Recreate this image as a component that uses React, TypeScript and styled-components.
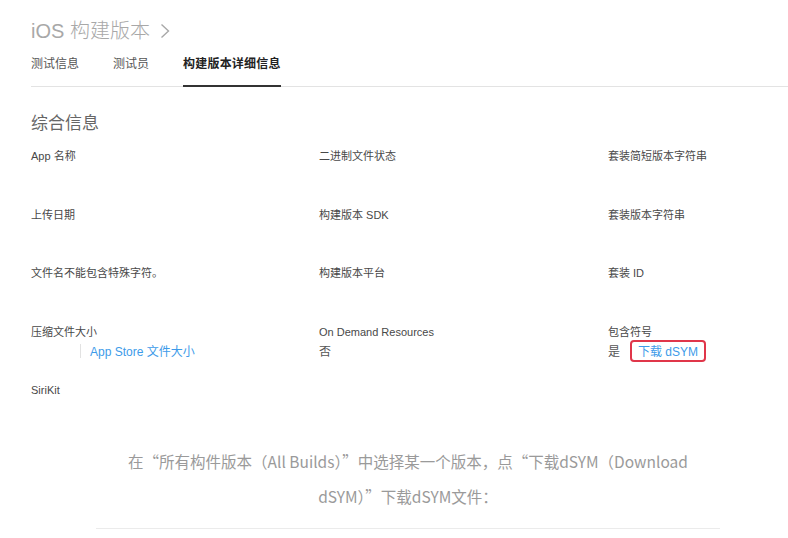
import styled, { createGlobalStyle } from "styled-components";

const GlobalStyle = createGlobalStyle`
  body {
    margin: 0;
    background: #fff;
    font-family: "Liberation Sans", "Noto Sans CJK SC", sans-serif;
  }
`;

const Page = styled.div`
  width: 788px;
  height: 538px;
  overflow: hidden;
  background: #fff;
`;

const Header = styled.header`
  padding-left: 31px;
`;

const Title = styled.h1`
  margin: 0;
  padding-top: 19px;
  display: flex;
  align-items: center;
  gap: 10px;
  font-size: 20px;
  line-height: 24px;
  font-weight: 300;
  color: #a8a8a8;
`;

const Tabs = styled.nav`
  margin-top: 12px;
  display: flex;
  gap: 34px;
  border-bottom: 1px solid #e3e3e3;
`;

const Tab = styled.div<{ $active?: boolean }>`
  font-size: 12px;
  line-height: 18px;
  padding-bottom: 12px;
  letter-spacing: ${({ $active }) => ($active ? "0.2px" : "0")};
  font-weight: ${({ $active }) => ($active ? 700 : 400)};
  color: ${({ $active }) => ($active ? "#222" : "#555")};
  border-bottom: 2px solid ${({ $active }) => ($active ? "#333" : "transparent")};
  margin-bottom: -1px;
`;

const Section = styled.section`
  padding-left: 31px;
`;

const SectionTitle = styled.h2`
  margin: 25px 0 12px;
  font-size: 17px;
  line-height: 24px;
  font-weight: 400;
  color: #666;
`;

const InfoGrid = styled.div`
  display: grid;
  grid-template-columns: 288px 289px 1fr;
`;

const Cell = styled.div`
  height: 58.5px;
  display: flex;
  flex-direction: column;
`;

const Label = styled.div`
  font-size: 11px;
  line-height: 16px;
  color: #484848;
`;

const Value = styled.div`
  min-height: 22px;
  display: flex;
  align-items: center;
  font-size: 12px;
  color: #555;
`;

const Divider = styled.span`
  width: 1px;
  height: 14px;
  background: #e2e2e2;
  margin: 0 9px 0 49px;
`;

const Link = styled.a`
  color: #3d9be9;
  font-size: 12px;
  text-decoration: none;
`;

const Highlight = styled.span`
  margin-left: 10px;
  padding: 0 6px;
  height: 22px;
  display: inline-flex;
  align-items: center;
  box-sizing: border-box;
  border: 2px solid #e0364a;
  border-radius: 4px;
`;

const Article = styled.div`
  width: 624px;
  margin-left: 96px;
  margin-top: 3px;
  padding-bottom: 14px;
  border-bottom: 1px solid #ebebeb;
`;

const ArticleText = styled.p`
  margin: 0;
  text-align: center;
  font-family: "Noto Sans CJK SC", sans-serif;
  font-size: 15.5px;
  line-height: 35px;
  color: #9a9a9a;
`;

const Chevron = () => (
  <svg width="10" height="16" viewBox="0 0 10 16">
    <polyline points="1.5,1.5 8.5,8 1.5,14.5" fill="none" stroke="#a8a8a8" strokeWidth="1.4" />
  </svg>
);

const rows: { label: string; value?: React.ReactNode }[] = [
  { label: "App 名称" },
  { label: "二进制文件状态" },
  { label: "套装简短版本字符串" },
  { label: "上传日期" },
  { label: "构建版本 SDK" },
  { label: "套装版本字符串" },
  { label: "文件名不能包含特殊字符。" },
  { label: "构建版本平台" },
  { label: "套装 ID" },
  {
    label: "压缩文件大小",
    value: (
      <>
        <Divider />
        <Link>App Store 文件大小</Link>
      </>
    ),
  },
  { label: "On Demand Resources", value: "否" },
  {
    label: "包含符号",
    value: (
      <>
        是
        <Highlight>
          <Link>下载 dSYM</Link>
        </Highlight>
      </>
    ),
  },
  { label: "SiriKit" },
];

const App = () => {
  return (
    <Page>
      <GlobalStyle />
      <Header>
        <Title>
          iOS 构建版本 <Chevron />
        </Title>
        <Tabs>
          <Tab>测试信息</Tab>
          <Tab>测试员</Tab>
          <Tab $active>构建版本详细信息</Tab>
        </Tabs>
      </Header>
      <Section>
        <SectionTitle>综合信息</SectionTitle>
        <InfoGrid>
          {rows.map((r, idx) => (
            <Cell key={idx}>
              <Label>{r.label}</Label>
              <Value>{r.value}</Value>
            </Cell>
          ))}
        </InfoGrid>
      </Section>
      <Article>
        <ArticleText>
          在“所有构件版本（All Builds）”中选择某一个版本，点“下载dSYM（Download
          <br />
          dSYM）”下载dSYM文件：
        </ArticleText>
      </Article>
    </Page>
  );
};

export default App;
